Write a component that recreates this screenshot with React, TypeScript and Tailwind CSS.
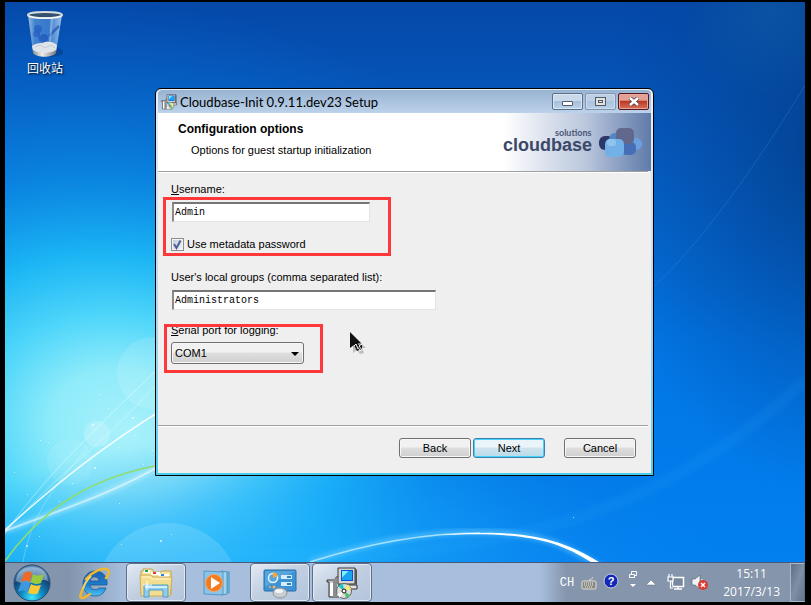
import React, { useState } from "react";

let Wallpaper: React.FC = () => {
  const sparks = [
    [92, 424, 2], [132, 417, 2], [118, 447, 1], [94, 467, 2], [40, 440, 1], [48, 442, 1],
    [85, 446, 1], [143, 464, 1], [72, 483, 1], [26, 545, 2], [39, 536, 1], [59, 501, 1],
    [14, 472, 1], [108, 408, 1], [134, 435, 1], [27, 494, 1], [160, 540, 2], [171, 534, 1],
    [119, 503, 1], [152, 450, 1], [573, 517, 1], [100, 394, 1], [121, 544, 1],
  ];
  return (
    <svg
      viewBox="5 2 800 560"
      preserveAspectRatio="none"
      className="absolute inset-0 h-full w-full"
      aria-hidden="true"
    >
      <defs>
        <linearGradient id="sky" x1="0" y1="0" x2="0" y2="1">
          <stop offset="0" stopColor="#0548a8" />
          <stop offset="0.35" stopColor="#0564ca" />
          <stop offset="0.6" stopColor="#0276e4" />
          <stop offset="1" stopColor="#0280f0" />
        </linearGradient>
        <radialGradient id="glow" gradientUnits="userSpaceOnUse" cx="0" cy="0" r="1" gradientTransform="translate(125 430) rotate(15) scale(540 430)">
          <stop offset="0" stopColor="#a9f1fb" />
          <stop offset="0.14" stopColor="#8eebfa" />
          <stop offset="0.26" stopColor="#4fd6fa" />
          <stop offset="0.4" stopColor="#1db9f6" stopOpacity="0.95" />
          <stop offset="0.58" stopColor="#0c92ea" stopOpacity="0.7" />
          <stop offset="0.8" stopColor="#087ade" stopOpacity="0.3" />
          <stop offset="1" stopColor="#0670d8" stopOpacity="0" />
        </radialGradient>
        <radialGradient id="base" gradientUnits="userSpaceOnUse" cx="0" cy="0" r="1" gradientTransform="translate(330 560) scale(400 130)">
          <stop offset="0" stopColor="#1fb0ff" stopOpacity="0.6" />
          <stop offset="0.5" stopColor="#129bfc" stopOpacity="0.4" />
          <stop offset="1" stopColor="#0a80f0" stopOpacity="0" />
        </radialGradient>
        <radialGradient id="right" gradientUnits="userSpaceOnUse" cx="0" cy="0" r="1" gradientTransform="translate(830 150) scale(230 340)">
          <stop offset="0" stopColor="#033f8c" stopOpacity="0.9" />
          <stop offset="1" stopColor="#03429b" stopOpacity="0" />
        </radialGradient>
        <radialGradient id="corner" gradientUnits="userSpaceOnUse" cx="770" cy="10" r="90">
          <stop offset="0" stopColor="#1c70ac" stopOpacity="0.3" />
          <stop offset="1" stopColor="#1c70ac" stopOpacity="0" />
        </radialGradient>
        <filter id="soft" x="-10%" y="-10%" width="120%" height="120%">
          <feGaussianBlur stdDeviation="2" />
        </filter>
      </defs>
      <rect x="5" y="2" width="800" height="560" fill="url(#sky)" />
      <rect x="5" y="2" width="800" height="560" fill="url(#glow)" />
      <rect x="5" y="2" width="800" height="560" fill="url(#base)" />
      <rect x="5" y="2" width="800" height="560" fill="url(#right)" />
      <rect x="5" y="2" width="800" height="560" fill="url(#corner)" />
      <circle cx="153" cy="373" r="36" fill="#fff" opacity="0.12" />
      <circle cx="97" cy="434" r="13" fill="#fff" opacity="0.2" />
      <circle cx="70" cy="462" r="23" fill="#fff" opacity="0.08" />
      <circle cx="168" cy="595" r="72" fill="#c8f5ff" opacity="0.18" />
      <path d="M5 533C50 470 100 425 165 362" stroke="#fff" strokeOpacity="0.4" fill="none" />
      <path d="M5 533C60 470 110 440 165 374" stroke="#fff" strokeOpacity="0.3" fill="none" />
      <path d="M5 530C60 480 105 445 165 408" stroke="#fff" strokeWidth="1.500" strokeOpacity="0.85" fill="none" />
      <path d="M5 531C60 510 110 495 165 463" stroke="#fff" strokeWidth="6" strokeOpacity="0.3" fill="none" filter="url(#soft)" />
      <path d="M5 531C60 510 110 495 165 463" stroke="#fff" strokeWidth="2" strokeOpacity="0.5" fill="none" />
      <path d="M23 562C32 510 60 480 90 445" stroke="#fff" strokeOpacity="0.25" fill="none" />
      <path d="M5 561C45 505 95 476 165 464" stroke="#8fdd6c" strokeWidth="1.500" fill="none" />
      <path d="M130 562C250 545 330 565 460 545S700 480 805 380" stroke="#4fb9ff" strokeWidth="12" strokeOpacity="0.08" fill="none" filter="url(#soft)" />
      <path d="M654 286C700 245 760 160 805 85" stroke="#4fb9ff" strokeOpacity="0.2" fill="none" />
      <path d="M310 562C360 545 420 532 480 532S565 545 600 566" stroke="#6fd0ff" strokeWidth="6" strokeOpacity="0.5" fill="none" filter="url(#soft)" />
      <path d="M310 562C360 546 420 533 480 533" stroke="#bdecff" strokeWidth="1.500" strokeOpacity="0.8" fill="none" />
      <path d="M440 535C520 528 562 538 602 564L594 564C555 538 520 532 440 535Z" fill="#fff" />
      {sparks.map(([x, y, s], i) => (
        <rect key={i} x={x} y={y} width={s} height={s} fill="#fff" opacity="0.6" />
      ))}
    </svg>
  );
};

let RecycleBinIcon: React.FC = () => (
  <svg width="40" height="48" viewBox="0 0 40 48" aria-hidden="true">
    <defs>
      <linearGradient id="bin" x1="0" x2="1">
        <stop offset="0" stopColor="#b9cfe8" />
        <stop offset="0.2" stopColor="#4c8bd4" />
        <stop offset="0.6" stopColor="#3f7fd0" />
        <stop offset="0.85" stopColor="#86b2e4" />
        <stop offset="1" stopColor="#b7d2ee" />
      </linearGradient>
      <linearGradient id="binFoot" x1="0" x2="1">
        <stop offset="0" stopColor="#8c8f92" />
        <stop offset="0.4" stopColor="#f0efec" />
        <stop offset="1" stopColor="#77797b" />
      </linearGradient>
    </defs>
    <ellipse cx="26" cy="42" rx="12" ry="5" fill="#03276a" opacity="0.35" />
    <path d="M3 5L8 42C12 47 27 47 31 42L37 5Z" fill="url(#bin)" opacity="0.85" />
    <path d="M7 36C12 32 17 34 20 32C25 31 29 32 32 35L31 41C26 44 12 44 8 41Z" fill="#dfe4ea" />
    <path d="M10 37L15 35L20 38L26 35L30 38" stroke="#c3cad3" fill="none" />
    <path d="M8 40C13 44 26 44 31 40L31 43C27 48 12 48 8 43Z" fill="url(#binFoot)" />
    <circle cx="13" cy="19" r="4" fill="#245cc0" opacity="0.7" />
    <circle cx="11" cy="24" r="3" fill="#245cc0" opacity="0.6" />
    <circle cx="19" cy="28" r="4" fill="#1f54b8" opacity="0.7" />
    <path d="M13 19L15 31" stroke="#2a62c3" strokeWidth="2" />
    <path d="M24 26L34 16" stroke="#1d56b6" strokeWidth="2.500" opacity="0.7" />
    <path d="M27 8L25 32" stroke="#fff" strokeWidth="2" opacity="0.3" />
    <ellipse cx="20" cy="5" rx="17" ry="3" fill="#34526f" stroke="#d8dcde" strokeWidth="2" />
    <path d="M4 6C10 9 30 9 36 6" stroke="#fff" fill="none" />
  </svg>
);

let InstallerIcon: React.FC<{ size: number }> = ({ size }) => (
  <svg width={size} height={size} viewBox="0 0 32 32" aria-hidden="true">
    <path d="M1 13H10V10H13V30H3V15H1Z" fill="#c9c9c9" stroke="#333" />
    <path d="M4 16H7V29H4Z" fill="#fff" />
    <path d="M7 13L11 9V30H7Z" fill="#8c8c8c" />
    <path d="M12 1H29V17H12Z" fill="#d8d5cc" stroke="#3a3a3a" />
    <path d="M29 1L31 3V18L29 17Z" fill="#555" />
    <path d="M15 3H27V14H15Z" fill="#0a4fe0" />
    <path d="M16 4H23L16 11Z" fill="#7df0ff" />
    <path d="M23 4H26V13H16V11Z" fill="#18a5ee" />
    <path d="M13 18H31V22H13Z" fill="#e6e4df" stroke="#333" />
    <circle cx="18" cy="24" r="7.500" fill="#dcdcdc" stroke="#666" />
    <path d="M18 24L12 19A8 8 0 0 1 17 17Z" fill="#19c8c0" />
    <path d="M18 24L22 17.500A8 8 0 0 1 25 22Z" fill="#f2ee70" />
    <path d="M18 24L24 28A8 8 0 0 1 20 31Z" fill="#4fc56a" />
    <path d="M18 24L14 30.500A8 8 0 0 1 11 27Z" fill="#fafafa" />
    <circle cx="18" cy="24" r="2" fill="#fff" stroke="#111" />
  </svg>
);

let Logo: React.FC = () => (
  <svg width="148" height="40" viewBox="0 0 148 40" role="img" aria-label="cloudbase solutions">
    <text x="0" y="27" fontSize="18" fontWeight="700" fontFamily="Liberation Sans, sans-serif" fill="#3b4868">
      cloudbase
    </text>
    <text x="52" y="12" fontSize="9" fontWeight="700" fontFamily="Lato, sans-serif" fill="#4a5675">
      solutions
    </text>
    <rect x="96" y="12" width="15" height="14" rx="6" fill="#2b3767" />
    <rect x="106" y="9" width="14" height="14" rx="6" fill="#5585c2" />
    <rect x="127" y="14" width="12" height="12" rx="6" fill="#6c9fdd" />
    <rect x="118" y="18" width="15" height="13" rx="5" fill="#456eb6" />
    <rect x="113" y="4" width="18" height="16" rx="5" fill="#62678c" />
    <rect x="102" y="15" width="19" height="18" rx="5" fill="#72b1e8" />
    <rect x="104" y="15" width="9" height="7" rx="3" fill="#8fc4ef" />
  </svg>
);

let StartOrb: React.FC = () => (
  <svg width="38" height="38" viewBox="0 0 38 38" aria-hidden="true">
    <defs>
      <radialGradient id="orb" cx="0.5" cy="0.9" r="0.8">
        <stop offset="0" stopColor="#3fe4ff" />
        <stop offset="0.4" stopColor="#0e86bd" />
        <stop offset="0.75" stopColor="#124677" />
        <stop offset="1" stopColor="#5b86b3" />
      </radialGradient>
    </defs>
    <circle cx="19" cy="19" r="18" fill="url(#orb)" stroke="#234a72" />
    <path d="M3 17C4 7 11 3 19 3S34 7 35 17C28 14 24 19 19 19S8 20 3 17Z" fill="#d5e5f2" opacity="0.45" />
    <path d="M11 9C14 7 17 7 19 9L17 18C14 16 11 16 8 18Z" fill="#ee6a28" />
    <path d="M20 10C23 12 27 12 31 10L28 19C24 21 21 20 18 18Z" fill="#9acb3e" />
    <path d="M8 19C11 17 14 17 17 19L15 28C12 26 9 26 5 28Z" fill="#3d98e0" />
    <path d="M18 20C21 22 24 22 28 21L25 29C22 31 19 30 15 29Z" fill="#fdc834" />
  </svg>
);

let IeIcon: React.FC = () => (
  <svg width="34" height="34" viewBox="0 0 34 34" aria-hidden="true">
    <defs>
      <linearGradient id="ie" x1="0" y1="0" x2="0" y2="1">
        <stop offset="0" stopColor="#1f62ae" />
        <stop offset="0.55" stopColor="#1a7ecb" />
        <stop offset="1" stopColor="#49c3f3" />
      </linearGradient>
    </defs>
    <path d="M30 19H13C13 24 20 25 22 22H29C27 28 23 30 18 30C11 30 6 25 6 18S11 5 18 5C26 5 31 11 30 19ZM13 15H22C22 10 14 9 13 15Z" fill="url(#ie)" stroke="#174f8e" strokeWidth="0.700" />
    <path d="M6 23C0 34 5 34 13 28M9 13C15 6 27 0 31 4C33 6 31 10 29 12" stroke="#f1b72d" strokeWidth="2.500" fill="none" strokeLinecap="round" />
    <path d="M6 23C7 19 9 15 14 10" stroke="#f7d164" strokeWidth="2" fill="none" />
  </svg>
);

let ExplorerIcon: React.FC = () => (
  <svg width="34" height="34" viewBox="0 0 34 34" aria-hidden="true">
    <path d="M2 5H4V3H13L15 6H22L23 5H32V28H2Z" fill="#f5e3a0" stroke="#c3a44e" />
    <path d="M5 4H11V7H5Z" fill="#fff" />
    <path d="M6 4H9V6H6Z" fill="#23a646" />
    <path d="M12 6H21V9H12Z" fill="#fff" />
    <path d="M14 6H17V8H14Z" fill="#d9462c" />
    <path d="M20 8H30V11H20Z" fill="#fff" />
    <path d="M22 8H25V10H22Z" fill="#2787e0" />
    <path d="M1 9H12L14 11H33L31 30H2Z" fill="#f3dd8e" stroke="#cfae56" />
    <path d="M3 11H11L13 13H31" stroke="#fff6cf" fill="none" />
    <path d="M5 19H29V31H24V24H10V31H5Z" fill="#8fcdee" stroke="#4f9cc9" />
    <path d="M6 20H28V22H6Z" fill="#d2f0fc" />
    <path d="M8 15V24M4 19H13" stroke="#fff" strokeWidth="1" />
  </svg>
);

let MediaIcon: React.FC = () => (
  <svg width="30" height="28" viewBox="0 0 30 28" aria-hidden="true">
    <path d="M21 3L27 2V24L21 26Z" fill="#67a9d2" />
    <path d="M18 2L24 3V25L18 26Z" fill="#a2d3ee" stroke="#4e94c2" />
    <path d="M1 2L20 3V26L1 25Z" fill="#8cc3e6" stroke="#5598c6" />
    <circle cx="11" cy="14" r="8.500" fill="#f47b20" stroke="#fba45b" />
    <path d="M8 8L17 14L8 20Z" fill="#fff" />
  </svg>
);

let ControlPanelIcon: React.FC = () => (
  <svg width="34" height="32" viewBox="0 0 34 32" aria-hidden="true">
    <rect x="1" y="3" width="32" height="21" rx="1" fill="#3d93d3" stroke="#276fa8" />
    <path d="M2 4H32L2 20Z" fill="#67b1e4" opacity="0.6" />
    <circle cx="10" cy="11" r="4.500" fill="none" stroke="#e9f5fd" strokeWidth="1.500" />
    <path d="M10 11V5A6 6 0 0 1 15 9Z" fill="#f7a63a" />
    <rect x="18" y="8" width="11" height="4" fill="#d5ecfa" />
    <rect x="24" y="9" width="4" height="2" fill="#2f82c3" />
    <rect x="18" y="15" width="11" height="4" fill="#d5ecfa" />
    <rect x="24" y="16" width="4" height="2" fill="#2f82c3" />
    <circle cx="7" cy="20" r="1" fill="#ffb057" />
    <circle cx="11" cy="20" r="1.500" fill="#ffb057" />
    <ellipse cx="17" cy="26" rx="7" ry="5" fill="#c9cdd2" stroke="#8d939b" />
    <ellipse cx="16" cy="24" rx="4" ry="2" fill="#f3f4f6" />
  </svg>
);

let Pointer: React.FC = () => (
  <svg width="20" height="24" viewBox="0 0 20 24" className="absolute top-[243px] left-[194px]" aria-hidden="true">
    <path d="M3 3L16 16L12 16L14 21L10 22L7 18L3 21Z" fill="#000" opacity="0.2" />
    <path d="M0 0V16L4 13L7 19L9 18L7 14L12 19V12H12Z" fill="#111" />
    <path d="M4 14L6 12L8 17M8 12H12L9 14L12 18L9 19" stroke="#fff" fill="none" />
  </svg>
);

let FooterButton: React.FC<{ text: string; primary?: boolean; className?: string }> = ({
  text,
  primary,
  className = "",
}) => (
  <button
    type="button"
    className={`h-5 w-[72px] rounded-[3px] border text-center leading-4 ${
      primary
        ? "border-[#3c7fb1] bg-linear-to-b from-[#eaf4f9] from-45% via-[#cfe4ef] via-50% to-[#b8dbe9] shadow-[inset_0_0_0_1px_#46d2f8]"
        : "border-[#707070] bg-linear-to-b from-[#f1f1f1] from-45% via-[#dedede] via-50% to-[#cfcfcf] shadow-[inset_0_0_0_1px_#f8f8f8]"
    } ${className}`}
  >
    {text}
  </button>
);

let SetupWindow: React.FC = () => {
  let [username, setUsername] = useState("Admin");
  let [useMetadata, setUseMetadata] = useState(true);
  let [groups, setGroups] = useState("Administrators");
  let [port, setPort] = useState("COM1");

  return (
    <section
      aria-label="Cloudbase-Init 0.9.11.dev23 Setup"
      className="absolute top-[86px] left-[150px] w-[499px] rounded-t-md border border-black bg-linear-to-b from-[#e8f0f8] via-[#c6d8ec] to-[#46cdee] px-0.5 pt-px pb-0.5 font-['Liberation_Sans',Arial,sans-serif] text-[11px] leading-4 text-black"
    >
      <div className="flex h-[23px] items-center rounded-t-sm bg-linear-to-b from-[#98b3d1] to-[#bcd2ea] pr-0.5 pl-[3px]">
        <InstallerIcon size={16} />
        <h1 className="ml-[3px] flex-1 font-[Lato,'Open_Sans',sans-serif] text-[13px]">
          Cloudbase-Init 0.9.11.dev23 Setup
        </h1>
        <div className="flex gap-0.5">
          <button
            type="button"
            aria-label="Minimize"
            className="flex h-[17px] w-[31px] items-end justify-center rounded-xs border border-[#5b6f8a] bg-linear-to-b from-[#c9d9ea] from-45% via-[#a5bfdb] via-50% to-[#bcd3ea] pb-[3px] shadow-[inset_0_0_0_1px_#dbe7f3]"
          >
            <span className="h-[5px] w-[11px] rounded-[1px] border border-[#535a68] bg-white"></span>
          </button>
          <button
            type="button"
            aria-label="Maximize"
            className="flex h-[17px] w-[31px] items-center justify-center rounded-xs border border-[#8195b0] bg-linear-to-b from-[#bccfe4] from-45% via-[#abc4de] via-50% to-[#b9d0e8] shadow-[inset_0_0_0_1px_#cbdbec]"
          >
            <span className="flex h-[9px] w-[11px] items-center justify-center border border-[#535a68] bg-[#e0e3e0]">
              <span className="h-[3px] w-[5px] border border-[#535a68]"></span>
            </span>
          </button>
          <button
            type="button"
            aria-label="Close"
            className="flex h-[17px] w-[31px] items-center justify-center rounded-xs border border-[#571620] bg-linear-to-b from-[#e3a196] from-40% via-[#bd3a22] via-50% to-[#d4705a] shadow-[inset_0_0_0_1px_#e5a79c]"
          >
            <svg width="12" height="9" viewBox="0 0 12 9" aria-hidden="true">
              <path d="M2 1L10 8M10 1L2 8" stroke="#4d3a48" strokeWidth="4" />
              <path d="M2 1L10 8M10 1L2 8" stroke="#fff" strokeWidth="2.500" />
            </svg>
          </button>
        </div>
      </div>

      <header className="flex h-[58px] justify-between bg-linear-to-r from-white from-70% via-[#b9c6dc] via-87% to-[#5f7ba9] pt-2 pl-5">
        <div>
          <h2 className="text-[12px] font-bold">Configuration options</h2>
          <p className="mt-[5px] pl-[13px]">Options for guest startup initialization</p>
        </div>
        <div className="pt-[3px]">
          <Logo />
        </div>
      </header>

      <form className="bg-[#efefef]" onSubmit={(e) => e.preventDefault()}>
        <div className="mr-[3px] h-0.5 border-t border-[#a0a0a0] bg-white"></div>
        <div className="flex min-h-[252px] flex-col items-start pt-2 pl-[13px]">
          <label htmlFor="username">
            <u>U</u>sername:
          </label>
          <div className="relative mt-[5px] flex flex-col items-start">
            <input
              id="username"
              type="text"
              value={username}
              onChange={(e) => setUsername(e.target.value)}
              className="ml-px h-5 w-[198px] border-t-2 border-r border-b border-l-2 border-t-[#757575] border-r-[#e3e3e3] border-b-[#e3e3e3] border-l-[#8a8a8a] bg-white pl-px font-['Liberation_Mono',monospace] text-[10px]"
            />
            <div className="mt-3.5 flex h-4 items-center gap-[3px]">
              <div className="relative flex">
                <input
                  id="metadata"
                  type="checkbox"
                  checked={useMetadata}
                  onChange={(e) => setUseMetadata(e.target.checked)}
                  className="peer h-[13px] w-[13px] appearance-none border border-[#8e8f8f] bg-linear-to-br from-[#c5cbd6] to-[#f3f4f6] shadow-[inset_0_0_0_1px_#f4f4f4]"
                />
                <svg width="13" height="13" viewBox="0 0 13 13" className="pointer-events-none absolute inset-0 hidden peer-checked:block" aria-hidden="true">
                  <path d="M3 6L5.500 10L9.500 2.500" stroke="#4a5f97" strokeWidth="2" fill="none" />
                </svg>
              </div>
              <label htmlFor="metadata">Use metadata password</label>
            </div>
            <div className="pointer-events-none absolute -top-[5px] -left-2 h-[59px] w-[228px] border-3 border-[#fe3839]"></div>
          </div>

          <label htmlFor="groups" className="mt-[17px]">
            User's local <u>g</u>roups (comma separated list):
          </label>
          <input
            id="groups"
            type="text"
            value={groups}
            onChange={(e) => setGroups(e.target.value)}
            className="mt-[5px] ml-px h-5 w-[264px] border-t-2 border-r border-b border-l-2 border-t-[#757575] border-r-[#e3e3e3] border-b-[#e3e3e3] border-l-[#8a8a8a] bg-white pl-px font-['Liberation_Mono',monospace] text-[10px]"
          />

          <div className="relative mt-3 flex flex-col items-start">
            <label htmlFor="port">
              <u>S</u>erial port for logging:
            </label>
            <div className="relative mt-1 flex">
              <select
                id="port"
                value={port}
                onChange={(e) => setPort(e.target.value)}
                className="h-[22px] w-[133px] appearance-none rounded-[3px] border border-[#707070] bg-linear-to-b from-[#f1f1f1] from-45% via-[#dfdfdf] via-50% to-[#cfcfcf] pl-[3px] shadow-[inset_0_0_0_1px_#f6f6f6]"
              >
                <option>COM1</option>
                <option>COM2</option>
              </select>
              <svg width="8" height="4" viewBox="0 0 8 4" className="pointer-events-none absolute top-[10px] right-[5px]" aria-hidden="true">
                <path d="M0 0H8L4 4Z" fill="#000" />
              </svg>
            </div>
            <div className="pointer-events-none absolute top-0.5 -left-[7px] h-[49px] w-[159px] border-3 border-[#fe3839]"></div>
          </div>
        </div>
        <div className="mr-[3px] h-0.5 border-t border-[#a0a0a0] bg-white"></div>
        <div className="flex justify-end gap-0.5 pt-[11px] pr-[15px] pb-[15px]">
          <FooterButton text="Back" />
          <FooterButton text="Next" primary />
          <FooterButton text="Cancel" className="ml-[17px]" />
        </div>
      </form>
      <Pointer />
    </section>
  );
};

let TaskButton: React.FC<{ label: string; open?: boolean; children: React.ReactNode }> = ({
  label,
  open,
  children,
}) => (
  <button
    type="button"
    aria-label={label}
    className={`flex h-full w-[60px] items-center justify-center ${
      open
        ? "rounded-sm border border-[#5d6f88] bg-linear-to-br from-[#e3eaf3] via-[#c0cee0] to-[#b4c5dc] shadow-[inset_0_0_0_1px_#e1e9f3]"
        : ""
    }`}
  >
    {children}
  </button>
);

let Taskbar: React.FC = () => (
  <footer className="flex h-10 shrink-0 items-stretch border-t border-[#46597a] bg-linear-to-r from-[#8395ad] from-8% via-[#a7bfdd] via-15% to-[#a7bfdd]">
    <button type="button" aria-label="Start" className="ml-2 flex w-[38px] items-center">
      <StartOrb />
    </button>
    <div className="ml-[13px] flex gap-0.5">
      <TaskButton label="Internet Explorer">
        <IeIcon />
      </TaskButton>
      <TaskButton label="Explorer" open>
        <ExplorerIcon />
      </TaskButton>
      <TaskButton label="Media Player">
        <MediaIcon />
      </TaskButton>
      <TaskButton label="Control Panel" open>
        <ControlPanelIcon />
      </TaskButton>
      <TaskButton label="Setup" open>
        <InstallerIcon size={32} />
      </TaskButton>
    </div>
    <div className="ml-auto flex items-center bg-linear-to-r from-[#a7bfdd] to-[#8495ac] to-10% pl-5 text-white">
      <span className="font-['Liberation_Mono',monospace] text-[12px] leading-4">CH</span>
      <svg width="16" height="14" viewBox="0 0 16 14" className="ml-[7px]" aria-hidden="true">
        <path d="M8 5C8 2 12 4 12 1" stroke="#d7d7d7" fill="none" />
        <rect x="1" y="5" width="14" height="8" rx="1" fill="#8a8a84" stroke="#e0ddd2" />
        <path d="M3 7H13M3 9H13M4 11H12" stroke="#f0eee6" strokeDasharray="1 1" />
      </svg>
      <svg width="16" height="16" viewBox="0 0 16 16" className="mb-1 ml-1.5" aria-hidden="true">
        <circle cx="8" cy="8" r="7" fill="#1428b8" stroke="#c8d0e2" />
        <text x="8" y="12" textAnchor="middle" fontSize="11" fontWeight="700" fontFamily="Liberation Sans, sans-serif" fill="#fff">
          ?
        </text>
      </svg>
      <svg width="10" height="18" viewBox="0 0 10 18" className="mb-2 ml-[9px]" aria-hidden="true">
        <path d="M3.500 4V1.500H8.500V5.500H6M1.500 4.500H6.500V7.500H1.500Z" stroke="#fff" fill="none" />
        <path d="M2 14H8L5 17Z" fill="#fff" />
      </svg>
      <svg width="10" height="6" viewBox="0 0 10 6" className="ml-2" aria-hidden="true">
        <path d="M0 5L5 0L10 5Z" fill="#fff" stroke="#5d6c80" strokeWidth="0.500" />
      </svg>
      <svg width="18" height="17" viewBox="0 0 18 17" className="ml-[11px]" aria-hidden="true">
        <rect x="5.500" y="3.500" width="11" height="9" fill="#76879f" stroke="#fff" strokeWidth="1.500" />
        <path d="M7 15H15M11 13V15" stroke="#fff" strokeWidth="1.500" />
        <path d="M1 3H6V7H1ZM2 0V3M5 0V3M3.500 7V14H6" stroke="#fff" strokeWidth="1.200" fill="#76879f" />
      </svg>
      <svg width="18" height="17" viewBox="0 0 18 17" className="ml-1.5" aria-hidden="true">
        <path d="M1 5H4L9 1V15L4 11H1Z" fill="#f3f3f3" stroke="#5a6678" strokeWidth="0.700" />
        <path d="M11 5V9" stroke="#fff" />
        <circle cx="12" cy="11" r="5" fill="#dd3a34" />
        <path d="M10 9L14 13M14 9L10 13" stroke="#fff" strokeWidth="1.500" />
      </svg>
      <time className="mt-px ml-3.5 text-center font-['Open_Sans','Noto_Sans',sans-serif] text-[12px] leading-[18px]">
        15:11
        <br />
        2017/3/13
      </time>
      <button
        type="button"
        aria-label="Show desktop"
        className="ml-2.5 h-full w-[15px] border border-[#a9b8cb] border-r-[#5f7188] bg-linear-to-br from-[#5e7084] via-[#7e90a5] to-[#62758b]"
      ></button>
    </div>
  </footer>
);

let App: React.FC = () => {
  return (
    <main className="flex h-screen flex-col overflow-hidden border-t-2 border-r-6 border-b-3 border-l-5 border-black bg-black">
      <div className="relative min-h-0 flex-1 overflow-hidden">
        <Wallpaper />
        <div className="relative flex w-20 flex-col items-center pt-2">
          <RecycleBinIcon />
          <span className="mt-0.5 font-['Noto_Sans_CJK_SC',sans-serif] text-[12px] leading-4 text-white [text-shadow:1px_1px_2px_#000]">
            回收站
          </span>
        </div>
        <SetupWindow />
      </div>
      <Taskbar />
    </main>
  );
};
export default App;
